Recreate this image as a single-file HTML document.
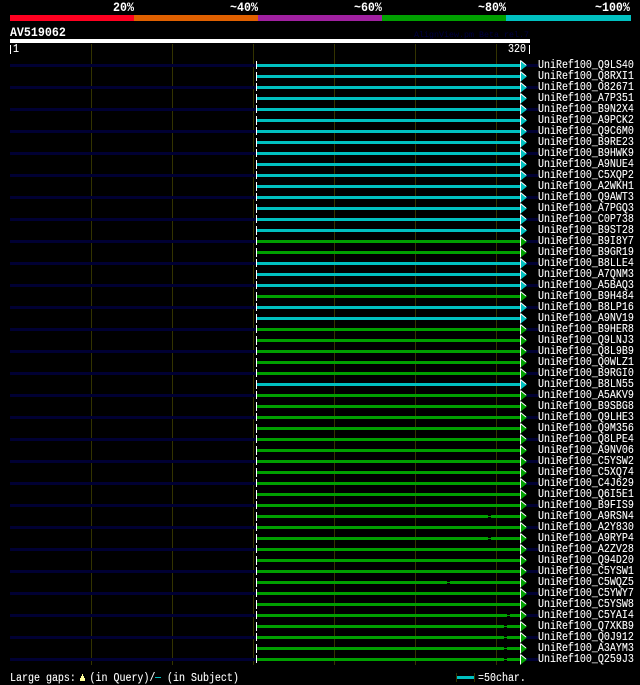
<!DOCTYPE html>
<html><head><meta charset="utf-8"><style>
html,body{margin:0;padding:0;background:#000;width:640px;height:685px;overflow:hidden}
svg{display:block}
text{font-family:"Liberation Mono","DejaVu Sans Mono",monospace;fill:#fff;white-space:pre}
.n{font-size:12px}
.n text{stroke:#fff;stroke-width:.1px}
.b{font-size:13px;font-weight:bold}
</style></head><body>
<svg width="640" height="685" viewBox="0 0 640 685" xmlns="http://www.w3.org/2000/svg">
<rect width="640" height="685" fill="#000"/>
<g shape-rendering="crispEdges">
<rect x="10" y="15" width="124" height="6" fill="#ff0020"/>
<rect x="134" y="15" width="124" height="6" fill="#e06000"/>
<rect x="258" y="15" width="124" height="6" fill="#a020a0"/>
<rect x="382" y="15" width="124" height="6" fill="#00a000"/>
<rect x="506" y="15" width="125" height="6" fill="#00c0c0"/>
<rect x="10" y="39" width="520" height="4" fill="#fff"/>
<rect x="10" y="45" width="1" height="9" fill="#fff"/>
<rect x="529" y="45" width="1" height="9" fill="#fff"/>
<g fill="#333300"><rect x="91" y="44" width="1" height="621"/><rect x="172" y="44" width="1" height="621"/><rect x="253" y="44" width="1" height="621"/><rect x="334" y="44" width="1" height="621"/><rect x="415" y="44" width="1" height="621"/><rect x="496" y="44" width="1" height="621"/></g>
<path fill="#000033" d="M10 64h246v3h-246zM525 64h13v3h-13zM10 86h246v3h-246zM525 86h13v3h-13zM10 108h246v3h-246zM525 108h13v3h-13zM10 130h246v3h-246zM525 130h13v3h-13zM10 152h246v3h-246zM525 152h13v3h-13zM10 174h246v3h-246zM525 174h13v3h-13zM10 196h246v3h-246zM525 196h13v3h-13zM10 218h246v3h-246zM525 218h13v3h-13zM10 240h246v3h-246zM525 240h13v3h-13zM10 262h246v3h-246zM525 262h13v3h-13zM10 284h246v3h-246zM525 284h13v3h-13zM10 306h246v3h-246zM525 306h13v3h-13zM10 328h246v3h-246zM525 328h13v3h-13zM10 350h246v3h-246zM525 350h13v3h-13zM10 372h246v3h-246zM525 372h13v3h-13zM10 394h246v3h-246zM525 394h13v3h-13zM10 416h246v3h-246zM525 416h13v3h-13zM10 438h246v3h-246zM525 438h13v3h-13zM10 460h246v3h-246zM525 460h13v3h-13zM10 482h246v3h-246zM525 482h13v3h-13zM10 504h246v3h-246zM525 504h13v3h-13zM10 526h246v3h-246zM525 526h13v3h-13zM10 548h246v3h-246zM525 548h13v3h-13zM10 570h246v3h-246zM525 570h13v3h-13zM10 592h246v3h-246zM525 592h13v3h-13zM10 614h246v3h-246zM525 614h13v3h-13zM10 636h246v3h-246zM525 636h13v3h-13zM10 658h246v3h-246zM525 658h13v3h-13z"/>
<path fill="#00c0c0" d="M257 64h264v3h-264zM257 75h264v3h-264zM257 86h264v3h-264zM257 97h264v3h-264zM257 108h264v3h-264zM257 119h264v3h-264zM257 130h264v3h-264zM257 141h264v3h-264zM257 152h264v3h-264zM257 163h264v3h-264zM257 174h264v3h-264zM257 185h264v3h-264zM257 196h264v3h-264zM257 207h264v3h-264zM257 218h264v3h-264zM257 229h264v3h-264zM257 262h264v3h-264zM257 273h264v3h-264zM257 284h264v3h-264zM257 306h264v3h-264zM257 317h264v3h-264zM257 383h264v3h-264z"/>
<path fill="#00a000" d="M257 240h264v3h-264zM257 251h264v3h-264zM257 295h264v3h-264zM257 328h264v3h-264zM257 339h264v3h-264zM257 350h264v3h-264zM257 361h264v3h-264zM257 372h264v3h-264zM257 394h264v3h-264zM257 405h264v3h-264zM257 416h264v3h-264zM257 427h264v3h-264zM257 438h264v3h-264zM257 449h264v3h-264zM257 460h264v3h-264zM257 471h264v3h-264zM257 482h264v3h-264zM257 493h264v3h-264zM257 504h264v3h-264zM257 515h264v3h-264zM257 526h264v3h-264zM257 537h264v3h-264zM257 548h264v3h-264zM257 559h264v3h-264zM257 570h264v3h-264zM257 581h264v3h-264zM257 592h264v3h-264zM257 603h264v3h-264zM257 614h264v3h-264zM257 625h264v3h-264zM257 636h264v3h-264zM257 647h264v3h-264zM257 658h264v3h-264z"/>
<g fill="#000">
<rect x="488" y="515" width="3" height="1"/><rect x="488" y="517" width="3" height="1"/>
<rect x="488" y="537" width="3" height="1"/><rect x="488" y="539" width="3" height="1"/>
<rect x="447" y="581" width="3" height="1"/><rect x="447" y="583" width="3" height="1"/>
<rect x="507" y="614" width="3" height="1"/><rect x="507" y="616" width="3" height="1"/>
<rect x="504" y="625" width="3" height="1"/><rect x="504" y="627" width="3" height="1"/>
<rect x="504" y="636" width="3" height="1"/><rect x="504" y="638" width="3" height="1"/>
<rect x="504" y="647" width="3" height="1"/><rect x="504" y="649" width="3" height="1"/>
<rect x="504" y="658" width="3" height="1"/><rect x="504" y="660" width="3" height="1"/>
</g>
<path fill="none" stroke="#fff" stroke-width="1" stroke-dasharray="8 3 9 2" d="M256.5 61V665"/>
</g>
<defs>
<g id="c"><path d="M520 60L527 65.5L520 71Z" fill="#00c0c0"/><path d="M520.5 60.5V70.5M520.5 60.5L526 65" fill="none" stroke="#fff" stroke-width="1"/></g>
<g id="g"><path d="M520 60L527 65.5L520 71Z" fill="#00a000"/><path d="M520.5 60.5V70.5M520.5 60.5L526 65" fill="none" stroke="#fff" stroke-width="1"/></g>
</defs>
<use href="#c" y="0"/><use href="#c" y="11"/><use href="#c" y="22"/><use href="#c" y="33"/><use href="#c" y="44"/><use href="#c" y="55"/><use href="#c" y="66"/><use href="#c" y="77"/><use href="#c" y="88"/><use href="#c" y="99"/><use href="#c" y="110"/><use href="#c" y="121"/><use href="#c" y="132"/><use href="#c" y="143"/><use href="#c" y="154"/><use href="#c" y="165"/>
<use href="#g" y="176"/><use href="#g" y="187"/><use href="#c" y="198"/><use href="#c" y="209"/><use href="#c" y="220"/><use href="#g" y="231"/><use href="#c" y="242"/><use href="#c" y="253"/><use href="#g" y="264"/><use href="#g" y="275"/><use href="#g" y="286"/><use href="#g" y="297"/><use href="#g" y="308"/><use href="#c" y="319"/>
<use href="#g" y="330"/><use href="#g" y="341"/><use href="#g" y="352"/><use href="#g" y="363"/><use href="#g" y="374"/><use href="#g" y="385"/><use href="#g" y="396"/><use href="#g" y="407"/><use href="#g" y="418"/><use href="#g" y="429"/><use href="#g" y="440"/><use href="#g" y="451"/><use href="#g" y="462"/><use href="#g" y="473"/><use href="#g" y="484"/><use href="#g" y="495"/><use href="#g" y="506"/><use href="#g" y="517"/><use href="#g" y="528"/><use href="#g" y="539"/><use href="#g" y="550"/><use href="#g" y="561"/><use href="#g" y="572"/><use href="#g" y="583"/><use href="#g" y="594"/>
<g transform="scale(.897,1)" class="b">
<text x="126" y="11">20%</text>
<text x="256.4" y="11">~40%</text>
<text x="394.6" y="11">~60%</text>
<text x="532.9" y="11">~80%</text>
<text x="663.3" y="11">~100%</text>
<text x="11.1" y="36">AV519062</text>
</g>
<text x="414" y="37" font-size="8.33" style="fill:#000040">AlignView.pm Beta rel.7</text>
<g transform="translate(0,-1) scale(.8333,1)" class="n">
<text x="15.6" y="53">1</text>
<text x="609.6" y="53">320</text>
<text x="645.6" y="69">UniRef100_Q9LS40</text>
<text x="645.6" y="80">UniRef100_Q8RXI1</text>
<text x="645.6" y="91">UniRef100_O82671</text>
<text x="645.6" y="102">UniRef100_A7P351</text>
<text x="645.6" y="113">UniRef100_B9N2X4</text>
<text x="645.6" y="124">UniRef100_A9PCK2</text>
<text x="645.6" y="135">UniRef100_Q9C6M0</text>
<text x="645.6" y="146">UniRef100_B9RE23</text>
<text x="645.6" y="157">UniRef100_B9HWK9</text>
<text x="645.6" y="168">UniRef100_A9NUE4</text>
<text x="645.6" y="179">UniRef100_C5XQP2</text>
<text x="645.6" y="190">UniRef100_A2WKH1</text>
<text x="645.6" y="201">UniRef100_Q9AWT3</text>
<text x="645.6" y="212">UniRef100_A7PGQ3</text>
<text x="645.6" y="223">UniRef100_C0P738</text>
<text x="645.6" y="234">UniRef100_B9ST28</text>
<text x="645.6" y="245">UniRef100_B9I8Y7</text>
<text x="645.6" y="256">UniRef100_B9GR19</text>
<text x="645.6" y="267">UniRef100_B8LLE4</text>
<text x="645.6" y="278">UniRef100_A7QNM3</text>
<text x="645.6" y="289">UniRef100_A5BAQ3</text>
<text x="645.6" y="300">UniRef100_B9H484</text>
<text x="645.6" y="311">UniRef100_B8LP16</text>
<text x="645.6" y="322">UniRef100_A9NV19</text>
<text x="645.6" y="333">UniRef100_B9HER8</text>
<text x="645.6" y="344">UniRef100_Q9LNJ3</text>
<text x="645.6" y="355">UniRef100_Q8L9B9</text>
<text x="645.6" y="366">UniRef100_Q0WLZ1</text>
<text x="645.6" y="377">UniRef100_B9RGI0</text>
<text x="645.6" y="388">UniRef100_B8LN55</text>
<text x="645.6" y="399">UniRef100_A5AKV9</text>
<text x="645.6" y="410">UniRef100_B9SBG8</text>
<text x="645.6" y="421">UniRef100_Q9LHE3</text>
<text x="645.6" y="432">UniRef100_Q9M356</text>
<text x="645.6" y="443">UniRef100_Q8LPE4</text>
<text x="645.6" y="454">UniRef100_A9NV06</text>
<text x="645.6" y="465">UniRef100_C5YSW2</text>
<text x="645.6" y="476">UniRef100_C5XQ74</text>
<text x="645.6" y="487">UniRef100_C4J629</text>
<text x="645.6" y="498">UniRef100_Q6I5E1</text>
<text x="645.6" y="509">UniRef100_B9FIS9</text>
<text x="645.6" y="520">UniRef100_A9RSN4</text>
<text x="645.6" y="531">UniRef100_A2Y830</text>
<text x="645.6" y="542">UniRef100_A9RYP4</text>
<text x="645.6" y="553">UniRef100_A2ZV28</text>
<text x="645.6" y="564">UniRef100_Q94D20</text>
<text x="645.6" y="575">UniRef100_C5YSW1</text>
<text x="645.6" y="586">UniRef100_C5WQZ5</text>
<text x="645.6" y="597">UniRef100_C5YWY7</text>
<text x="645.6" y="608">UniRef100_C5YSW8</text>
<text x="645.6" y="619">UniRef100_C5YAI4</text>
<text x="645.6" y="630">UniRef100_Q7XKB9</text>
<text x="645.6" y="641">UniRef100_Q0J912</text>
<text x="645.6" y="652">UniRef100_A3AYM3</text>
<text x="645.6" y="663">UniRef100_Q259J3</text>
<text x="12" y="682">Large gaps:</text>
<text x="107.4" y="682">(in Query)/</text>
<text x="200.4" y="682">(in Subject)</text>
<text x="573.6" y="682">=50char.</text>
</g>
<g shape-rendering="crispEdges">
<path d="M82 674H83V676H84V678H85V681H80V678H81V676H82Z" fill="#ffff99"/>
<rect x="155" y="677" width="6" height="1" fill="#00c0c0"/>
<rect x="456" y="673" width="1" height="9" fill="#333300"/>
<rect x="474" y="673" width="1" height="9" fill="#333300"/>
<rect x="457" y="676" width="17" height="3" fill="#00c0c0"/>
</g>
</svg>
</body></html>
